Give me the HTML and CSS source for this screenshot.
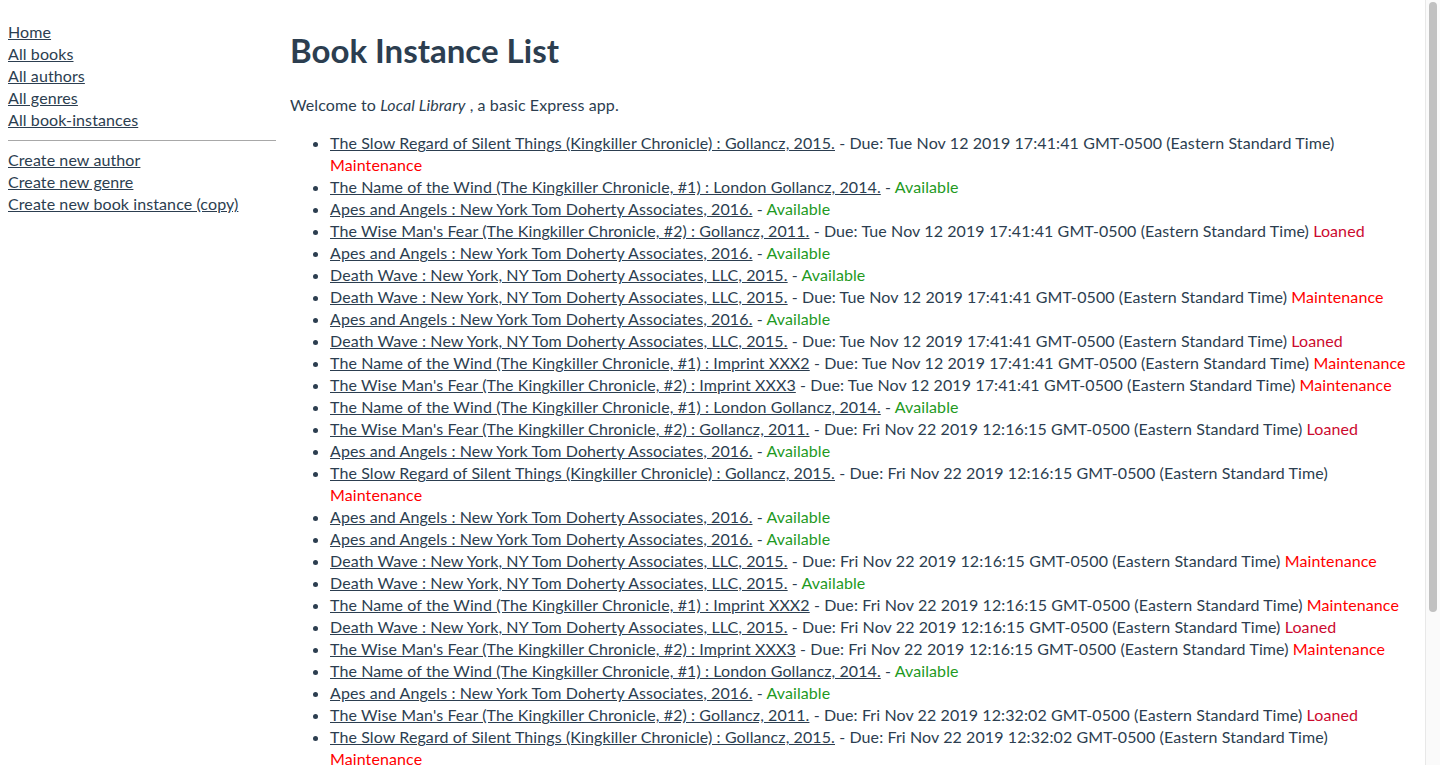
FILE: index.html
```html
<!DOCTYPE html>
<html lang="en">
<head>
<meta charset="utf-8">
<title>Local Library</title>
<link rel="stylesheet" href="styles.css">
</head>
<body>
<div class="layout">
  <nav class="sidebar">
    <ul class="side-links">
      <li><a href="#">Home</a></li>
      <li><a href="#">All books</a></li>
      <li><a href="#">All authors</a></li>
      <li><a href="#">All genres</a></li>
      <li><a href="#">All book-instances</a></li>
    </ul>
    <hr class="side-rule">
    <ul class="side-links">
      <li><a href="#">Create new author</a></li>
      <li><a href="#">Create new genre</a></li>
      <li><a href="#">Create new book instance (copy)</a></li>
    </ul>
  </nav>
  <main class="content">
    <h1 class="title">Book Instance List</h1>
    <p class="welcome">Welcome to <em>Local Library</em> , a basic Express app.</p>
    <ul class="instances">
      <li><a href="#">The Slow Regard of Silent Things (Kingkiller Chronicle) : Gollancz, 2015.</a> - Due: Tue Nov 12 2019 17:41:41 GMT-0500 (Eastern Standard Time) <span class="st-maint">Maintenance</span></li>
      <li><a href="#">The Name of the Wind (The Kingkiller Chronicle, #1) : London Gollancz, 2014.</a> - <span class="st-avail">Available</span></li>
      <li><a href="#">Apes and Angels : New York Tom Doherty Associates, 2016.</a> - <span class="st-avail">Available</span></li>
      <li><a href="#">The Wise Man's Fear (The Kingkiller Chronicle, #2) : Gollancz, 2011.</a> - Due: Tue Nov 12 2019 17:41:41 GMT-0500 (Eastern Standard Time) <span class="st-loan">Loaned</span></li>
      <li><a href="#">Apes and Angels : New York Tom Doherty Associates, 2016.</a> - <span class="st-avail">Available</span></li>
      <li><a href="#">Death Wave : New York, NY Tom Doherty Associates, LLC, 2015.</a> - <span class="st-avail">Available</span></li>
      <li><a href="#">Death Wave : New York, NY Tom Doherty Associates, LLC, 2015.</a> - Due: Tue Nov 12 2019 17:41:41 GMT-0500 (Eastern Standard Time) <span class="st-maint">Maintenance</span></li>
      <li><a href="#">Apes and Angels : New York Tom Doherty Associates, 2016.</a> - <span class="st-avail">Available</span></li>
      <li><a href="#">Death Wave : New York, NY Tom Doherty Associates, LLC, 2015.</a> - Due: Tue Nov 12 2019 17:41:41 GMT-0500 (Eastern Standard Time) <span class="st-loan">Loaned</span></li>
      <li><a href="#">The Name of the Wind (The Kingkiller Chronicle, #1) : Imprint XXX2</a> - Due: Tue Nov 12 2019 17:41:41 GMT-0500 (Eastern Standard Time) <span class="st-maint">Maintenance</span></li>
      <li><a href="#">The Wise Man's Fear (The Kingkiller Chronicle, #2) : Imprint XXX3</a> - Due: Tue Nov 12 2019 17:41:41 GMT-0500 (Eastern Standard Time) <span class="st-maint">Maintenance</span></li>
      <li><a href="#">The Name of the Wind (The Kingkiller Chronicle, #1) : London Gollancz, 2014.</a> - <span class="st-avail">Available</span></li>
      <li><a href="#">The Wise Man's Fear (The Kingkiller Chronicle, #2) : Gollancz, 2011.</a> - Due: Fri Nov 22 2019 12:16:15 GMT-0500 (Eastern Standard Time) <span class="st-loan">Loaned</span></li>
      <li><a href="#">Apes and Angels : New York Tom Doherty Associates, 2016.</a> - <span class="st-avail">Available</span></li>
      <li><a href="#">The Slow Regard of Silent Things (Kingkiller Chronicle) : Gollancz, 2015.</a> - Due: Fri Nov 22 2019 12:16:15 GMT-0500 (Eastern Standard Time) <span class="st-maint">Maintenance</span></li>
      <li><a href="#">Apes and Angels : New York Tom Doherty Associates, 2016.</a> - <span class="st-avail">Available</span></li>
      <li><a href="#">Apes and Angels : New York Tom Doherty Associates, 2016.</a> - <span class="st-avail">Available</span></li>
      <li><a href="#">Death Wave : New York, NY Tom Doherty Associates, LLC, 2015.</a> - Due: Fri Nov 22 2019 12:16:15 GMT-0500 (Eastern Standard Time) <span class="st-maint">Maintenance</span></li>
      <li><a href="#">Death Wave : New York, NY Tom Doherty Associates, LLC, 2015.</a> - <span class="st-avail">Available</span></li>
      <li><a href="#">The Name of the Wind (The Kingkiller Chronicle, #1) : Imprint XXX2</a> - Due: Fri Nov 22 2019 12:16:15 GMT-0500 (Eastern Standard Time) <span class="st-maint">Maintenance</span></li>
      <li><a href="#">Death Wave : New York, NY Tom Doherty Associates, LLC, 2015.</a> - Due: Fri Nov 22 2019 12:16:15 GMT-0500 (Eastern Standard Time) <span class="st-loan">Loaned</span></li>
      <li><a href="#">The Wise Man's Fear (The Kingkiller Chronicle, #2) : Imprint XXX3</a> - Due: Fri Nov 22 2019 12:16:15 GMT-0500 (Eastern Standard Time) <span class="st-maint">Maintenance</span></li>
      <li><a href="#">The Name of the Wind (The Kingkiller Chronicle, #1) : London Gollancz, 2014.</a> - <span class="st-avail">Available</span></li>
      <li><a href="#">Apes and Angels : New York Tom Doherty Associates, 2016.</a> - <span class="st-avail">Available</span></li>
      <li><a href="#">The Wise Man's Fear (The Kingkiller Chronicle, #2) : Gollancz, 2011.</a> - Due: Fri Nov 22 2019 12:32:02 GMT-0500 (Eastern Standard Time) <span class="st-loan">Loaned</span></li>
      <li><a href="#">The Slow Regard of Silent Things (Kingkiller Chronicle) : Gollancz, 2015.</a> - Due: Fri Nov 22 2019 12:32:02 GMT-0500 (Eastern Standard Time) <span class="st-maint">Maintenance</span></li>
      <li><a href="#">Death Wave : New York, NY Tom Doherty Associates, LLC, 2015.</a> - <span class="st-avail">Available</span></li>
      <li><a href="#">Apes and Angels : New York Tom Doherty Associates, 2016.</a> - <span class="st-avail">Available</span></li>
      <li><a href="#">The Name of the Wind (The Kingkiller Chronicle, #1) : London Gollancz, 2014.</a> - <span class="st-avail">Available</span></li>
      <li><a href="#">Death Wave : New York, NY Tom Doherty Associates, LLC, 2015.</a> - <span class="st-avail">Available</span></li>
    </ul>
  </main>
</div>
<div class="scrollbar" aria-hidden="true"><div class="scroll-thumb"></div></div>
</body>
</html>
```
FILE: styles.css
```css
html, body {
  margin: 0;
  padding: 0;
  background: #ffffff;
}

body {
  font-family: Lato, "Noto Sans", "Liberation Sans", sans-serif;
  font-size: 16px;
  line-height: 22px;
  letter-spacing: 0.1px;
  color: #2c3e50;
  padding: 21px 22px 20px 8px;
}

a {
  color: #2c3e50;
  text-decoration: underline;
}

.layout {
  display: grid;
  grid-template-columns: 268px 1fr;
  column-gap: 14px;
}

.side-links {
  list-style: none;
  margin: 0;
  padding: 0;
}

.side-rule {
  border: 0;
  border-top: 1px solid #a8a8a8;
  margin: 9px 0 8px 0;
}

.title {
  font-size: 33px;
  font-weight: 700;
  line-height: 40px;
  letter-spacing: 0;
  margin: 9px 0 24px 0;
}

.welcome {
  margin: 0 0 16px 0;
}

.instances {
  margin: 0;
  padding-left: 40px;
}

.st-avail { color: #1f9a1f; }
.st-maint { color: #ff0000; }
.st-loan { color: #cc0a2f; }

.scrollbar {
  position: fixed;
  top: 0;
  right: 0;
  bottom: 0;
  width: 14px;
  background: #fafafa;
  border-left: 1px solid #e8e8e8;
}

.scroll-thumb {
  margin: 2px 3px 0 3px;
  height: 610px;
  border-radius: 4px;
  background: #c1c1c1;
}
```
